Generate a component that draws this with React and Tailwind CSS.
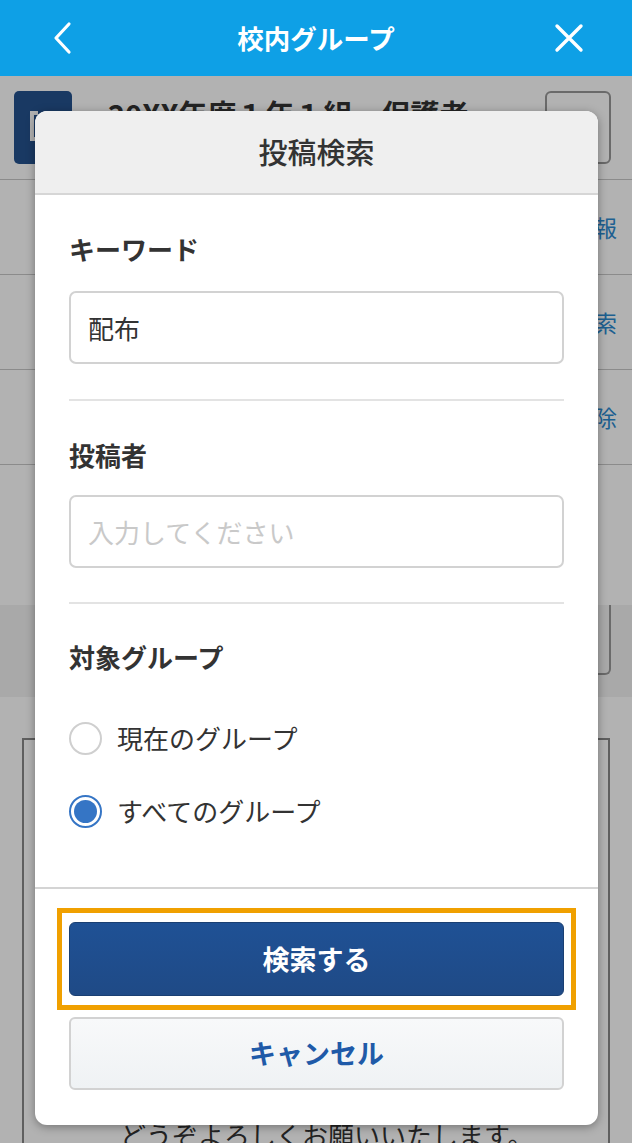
import React from "react";

const font = { fontFamily: '"Noto Sans CJK JP", "Noto Sans", sans-serif' };

function Radio({ checked, label }) {
  return (
    <div className="flex items-center h-[50px]">
      {checked ? (
        <div className="w-[33px] h-[33px] rounded-full border-2 border-[#3575c5] bg-white flex items-center justify-center shrink-0">
          <div className="w-[23px] h-[23px] rounded-full bg-[#3575c5]" />
        </div>
      ) : (
        <div className="w-[33px] h-[33px] rounded-full border-2 border-[#cfcfcf] bg-white shrink-0" />
      )}
      <span className="ml-[15px] text-[26px] text-[#333] leading-[36px]">{label}</span>
    </div>
  );
}

export default function App() {
  return (
    <div className="relative w-[632px] h-[1143px] overflow-hidden bg-white" style={font}>
      {/* Header */}
      <div className="h-[76px] bg-[#0ea0e6] flex items-center justify-between px-[48px]">
        <svg width="30" height="34" viewBox="0 0 30 34" fill="none">
          <path d="M21 3 L8 17 L21 31" stroke="white" strokeWidth="3.2" strokeLinecap="round" strokeLinejoin="round" />
        </svg>
        <div className="text-white text-[26.5px] font-bold">校内グループ</div>
        <svg width="30" height="30" viewBox="0 0 30 30" fill="none">
          <path d="M3 3 L27 27 M27 3 L3 27" stroke="white" strokeWidth="3.4" strokeLinecap="round" />
        </svg>
      </div>

      {/* Underlying page */}
      <div className="flex flex-col">
        <div className="h-[104px] flex items-center px-[21px] pl-[14px] border-b border-[#c8c8c8]">
          <div className="w-[58px] h-[73px] rounded-[5px] bg-[#25528f] relative shrink-0">
            <div className="absolute left-[16px] top-[20px] w-[8px] h-[30px] border-l-[4px] border-y-[4px] border-white" />
          </div>
          <div className="ml-[36px] flex-1 whitespace-nowrap overflow-hidden text-[29px] font-bold text-[#333] leading-[36px] -mt-[30px]">20XX年度１年１組　保護者</div>
          <div className="w-[66px] h-[73px] rounded-[6px] border-2 border-[#999] bg-white shrink-0" />
        </div>
        <div className="h-[95px] flex items-center justify-end pr-[15px] border-b border-[#c8c8c8]">
          <span className="text-[23px] text-[#2c8ad0]">グループ情報</span>
        </div>
        <div className="h-[95px] flex items-center justify-end pr-[15px] border-b border-[#c8c8c8]">
          <span className="text-[23px] text-[#2c8ad0]">投稿検索</span>
        </div>
        <div className="h-[95px] flex items-center justify-end pr-[15px] border-b border-[#c8c8c8]">
          <span className="text-[23px] text-[#2c8ad0]">通知解除</span>
        </div>
        <div className="h-[140px]" />
        <div className="h-[92px] bg-[#f2f2f2] flex justify-end pr-[21px]">
          <div className="w-[120px] h-[70px] rounded-b-[6px] border-2 border-t-0 border-[#999] bg-[#f2f2f2]" />
        </div>
        <div className="px-[22px] pt-[41px]">
          <div className="border-2 border-b-0 border-[#888] h-[420px] pl-[96px] pt-[15px] text-[26px] text-[#333] leading-[40px] whitespace-nowrap">
            <div>保護者の皆様へ</div>
            <div>いつもお世話になっております。</div>
            <div>配布物についてのお知らせです。</div>
            <div>　</div>
            <div>　</div>
            <div>　</div>
            <div>　</div>
            <div>　</div>
            <div>　</div>
            <div>どうぞよろしくお願いいたします。</div>
          </div>
        </div>
      </div>

      {/* Overlay */}
      <div className="absolute left-0 right-0 top-[76px] bottom-0 bg-black/30" />

      {/* Modal */}
      <div className="absolute left-[35px] top-[111px] w-[563px] bg-white rounded-[12px] overflow-hidden shadow-[0_2px_10px_rgba(0,0,0,0.35)]">
        <div className="h-[84px] bg-[#efefef] border-b-2 border-[#d6d6d6] flex items-center justify-center">
          <span className="text-[29px] text-[#333] font-medium">投稿検索</span>
        </div>
        <div className="px-[34px] pb-[51px]">
          <div className="pt-[36px] text-[26px] font-bold text-[#333] leading-[36px]">キーワード</div>
          <div className="mt-[24px] h-[73px] border-2 border-[#d2d2d2] rounded-[7px] flex items-center px-[17px] text-[26px] text-[#333]">配布</div>
          <div className="mt-[35px] h-[2px] bg-[#e3e3e3]" />
          <div className="pt-[36px] text-[26px] font-bold text-[#333] leading-[36px]">投稿者</div>
          <div className="mt-[22px] h-[73px] border-2 border-[#d2d2d2] rounded-[7px] flex items-center px-[17px] text-[26px] text-[#c9c9c9]">入力してください</div>
          <div className="mt-[34px] h-[2px] bg-[#e3e3e3]" />
          <div className="pt-[35px] text-[26px] font-bold text-[#333] leading-[36px]">対象グループ</div>
          <div className="mt-[38px]">
            <Radio checked={false} label="現在のグループ" />
          </div>
          <div className="mt-[23px]">
            <Radio checked={true} label="すべてのグループ" />
          </div>
        </div>
        <div className="border-t-2 border-[#d4d4d4] px-[22px] pt-[19px] pb-[35px]">
          <div className="border-[5px] border-[#f0a000] px-[7px] py-[9px]">
            <div className="h-[74px] rounded-[6px] bg-gradient-to-b from-[#1f5195] to-[#1f4a86] border border-[#1a3f72] flex items-center justify-center text-white text-[27px] font-bold">
              検索する
            </div>
          </div>
          <div className="mx-[12px] mt-[7px] h-[73px] rounded-[6px] bg-gradient-to-b from-[#f8f9fa] to-[#eff2f4] border-2 border-[#d2d2d2] flex items-center justify-center text-[#1f5aa8] text-[27px] font-bold">
            キャンセル
          </div>
        </div>
      </div>
    </div>
  );
}
